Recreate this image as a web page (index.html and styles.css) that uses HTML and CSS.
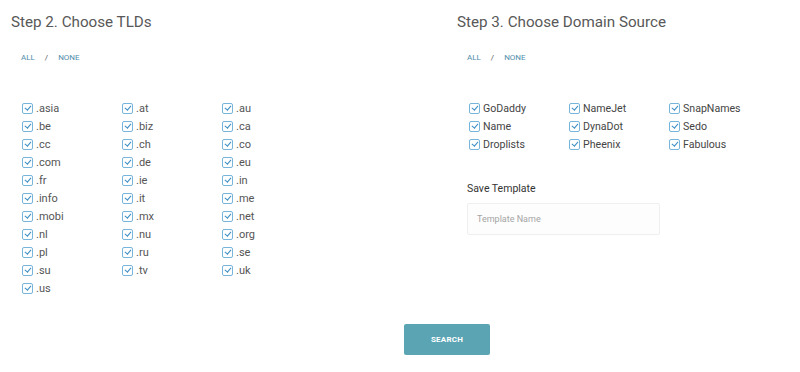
FILE: index.html
```html
<!DOCTYPE html>
<html>
<head>
<meta charset="utf-8">
<link rel="stylesheet" href="styles.css">
</head>
<body>
<div class="page">
  <div class="cols">
    <section class="col">
      <h2 class="title">Step 2. Choose TLDs</h2>
      <div class="sel"><a class="lnk">ALL</a><span class="slash">/</span><a class="lnk">NONE</a></div>
      <div class="grid">
        <label class="item"><span class="cb"></span>.asia</label>
        <label class="item"><span class="cb"></span>.at</label>
        <label class="item"><span class="cb"></span>.au</label>
        <label class="item"><span class="cb"></span>.be</label>
        <label class="item"><span class="cb"></span>.biz</label>
        <label class="item"><span class="cb"></span>.ca</label>
        <label class="item"><span class="cb"></span>.cc</label>
        <label class="item"><span class="cb"></span>.ch</label>
        <label class="item"><span class="cb"></span>.co</label>
        <label class="item"><span class="cb"></span>.com</label>
        <label class="item"><span class="cb"></span>.de</label>
        <label class="item"><span class="cb"></span>.eu</label>
        <label class="item"><span class="cb"></span>.fr</label>
        <label class="item"><span class="cb"></span>.ie</label>
        <label class="item"><span class="cb"></span>.in</label>
        <label class="item"><span class="cb"></span>.info</label>
        <label class="item"><span class="cb"></span>.it</label>
        <label class="item"><span class="cb"></span>.me</label>
        <label class="item"><span class="cb"></span>.mobi</label>
        <label class="item"><span class="cb"></span>.mx</label>
        <label class="item"><span class="cb"></span>.net</label>
        <label class="item"><span class="cb"></span>.nl</label>
        <label class="item"><span class="cb"></span>.nu</label>
        <label class="item"><span class="cb"></span>.org</label>
        <label class="item"><span class="cb"></span>.pl</label>
        <label class="item"><span class="cb"></span>.ru</label>
        <label class="item"><span class="cb"></span>.se</label>
        <label class="item"><span class="cb"></span>.su</label>
        <label class="item"><span class="cb"></span>.tv</label>
        <label class="item"><span class="cb"></span>.uk</label>
        <label class="item"><span class="cb"></span>.us</label>
      </div>
    </section>
    <section class="col">
      <h2 class="title">Step 3. Choose Domain Source</h2>
      <div class="sel"><a class="lnk">ALL</a><span class="slash">/</span><a class="lnk">NONE</a></div>
      <div class="grid grid-src">
        <label class="item src"><span class="cb"></span>GoDaddy</label>
        <label class="item src"><span class="cb"></span>NameJet</label>
        <label class="item src"><span class="cb"></span>SnapNames</label>
        <label class="item src"><span class="cb"></span>Name</label>
        <label class="item src"><span class="cb"></span>DynaDot</label>
        <label class="item src"><span class="cb"></span>Sedo</label>
        <label class="item src"><span class="cb"></span>Droplists</label>
        <label class="item src"><span class="cb"></span>Pheenix</label>
        <label class="item src"><span class="cb"></span>Fabulous</label>
      </div>
      <div class="tpl">
        <div class="tpl-label">Save Template</div>
        <input class="tpl-input" type="text" placeholder="Template Name">
      </div>
    </section>
  </div>
  <div class="actions"><button class="btn">SEARCH</button></div>
</div>
</body>
</html>
```
FILE: styles.css
```css
html, body {
  margin: 0;
  padding: 0;
  background: #ffffff;
}
body {
  font-family: Roboto, "Liberation Sans", sans-serif;
  color: #555555;
}
.page {
  padding: 12px 0 0 11px;
}
.cols {
  display: grid;
  grid-template-columns: 446px 1fr;
}
.title {
  margin: 0;
  font-size: 15.2px;
  line-height: 20px;
  font-weight: 400;
  color: #585858;
}
.sel {
  margin-top: 21px;
  padding-left: 10px;
  font-size: 8px;
  line-height: 10px;
  display: flex;
  align-items: center;
}
.lnk {
  color: #4f8daa;
  text-transform: uppercase;
}
.slash {
  color: #555555;
  margin: 0 10px 0 10px;
  font-size: 8px;
}
.grid {
  margin-top: 36px;
  padding-left: 11px;
  display: grid;
  grid-template-columns: repeat(3, 100px);
  grid-auto-rows: 18px;
}
.grid-src {
  padding-left: 12px;
}
.item {
  display: flex;
  align-items: center;
  font-size: 11px;
  color: #555555;
}
.item.src {
  color: #444444;
  font-size: 10.6px;
}
.cb {
  position: relative;
  width: 9px;
  height: 9px;
  border: 1px solid #78b5dc;
  border-radius: 2px;
  background: #ffffff;
  margin-right: 3px;
  flex: none;
}
.cb::after {
  content: "";
  position: absolute;
  left: 3px;
  top: 0.5px;
  width: 2.5px;
  height: 5px;
  border-right: 1.5px solid #3a8cc2;
  border-bottom: 1.5px solid #3a8cc2;
  transform: rotate(40deg);
}
.tpl {
  margin-top: 29px;
  padding-left: 10px;
}
.tpl-label {
  font-size: 10.5px;
  line-height: 14px;
  color: #333333;
}
.tpl-input {
  display: block;
  box-sizing: border-box;
  margin-top: 7px;
  width: 193px;
  height: 32px;
  border: 1px solid #efefef;
  border-radius: 2px;
  background: #fdfdfd;
  padding: 0 9px;
  font-family: Roboto, "Liberation Sans", sans-serif;
  font-size: 9px;
  color: #555555;
  outline: none;
}
.tpl-input::placeholder {
  color: #a5a5a5;
}
.actions {
  margin-top: 27px;
  padding-left: 393px;
}
.btn {
  width: 86px;
  height: 31px;
  border: none;
  border-radius: 2px;
  background: #5ba4b3;
  color: #ffffff;
  font-family: Roboto, "Liberation Sans", sans-serif;
  font-size: 8px;
  font-weight: 700;
  letter-spacing: 0.2px;
  padding: 0;
}
```
